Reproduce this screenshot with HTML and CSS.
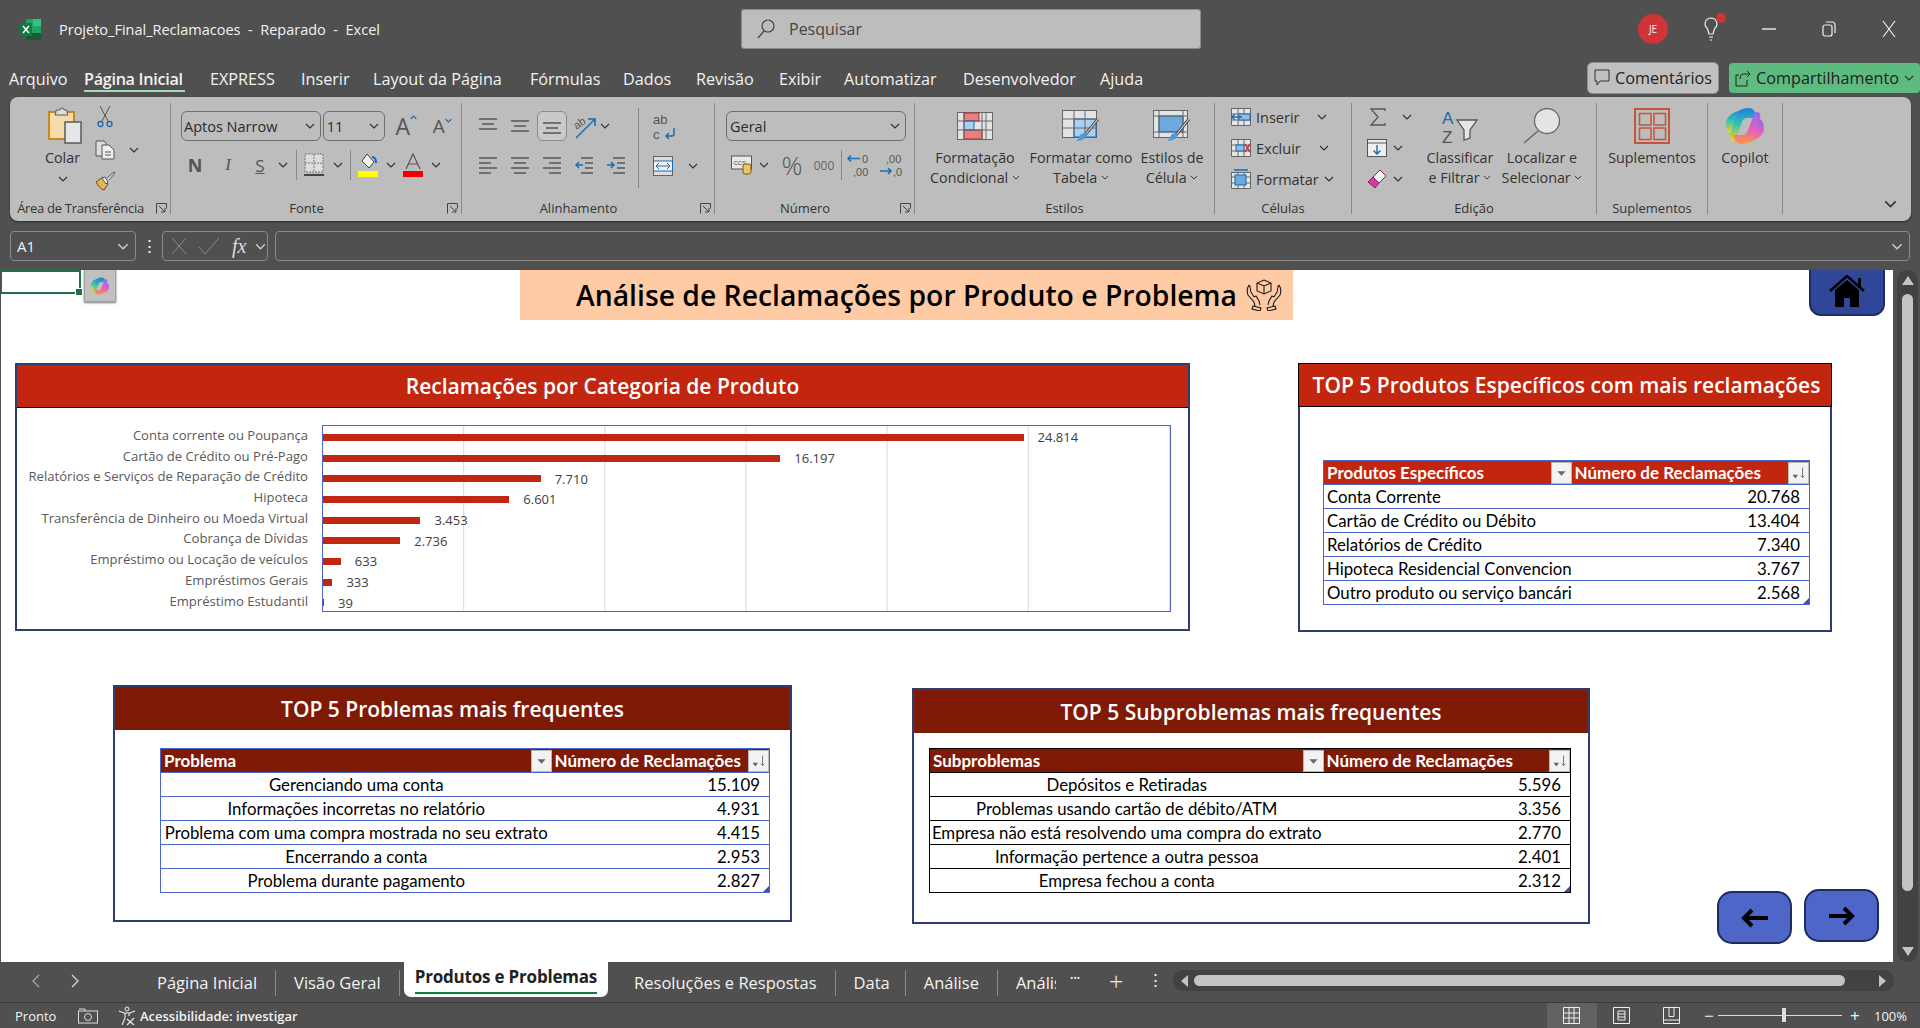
FILE: index.html
```html
<!DOCTYPE html>
<html lang="pt-BR">
<head>
	<meta charset="utf-8">
	<title>Projeto_Final_Reclamacoes - Reparado - Excel</title>
	<link rel="stylesheet" href="styles.css">
</head>
<body>
	<!-- icones usados mais de uma vez -->
	<svg class="defs" width="0" height="0">
		<defs>
			<symbol id="chev" viewBox="0 0 10 6"><path d="M1 1l4 4 4-4" fill="none" stroke="#333" stroke-width="1.2"/></symbol>
			<symbol id="launcher" viewBox="0 0 11 11"><path d="M.5 10.5V.5h10v5M3 3l6 6M9 5v4H5" fill="none" stroke="#444"/></symbol>
			<linearGradient id="cpA" x1="0" y1="0" x2="0" y2="1"><stop offset="0" stop-color="#1c7fe0"/><stop offset=".5" stop-color="#35c3b0"/><stop offset="1" stop-color="#f4d21f"/></linearGradient>
			<linearGradient id="cpB" x1="0" y1="0" x2="0" y2="1"><stop offset="0" stop-color="#8a6cf0"/><stop offset=".55" stop-color="#e85fc0"/><stop offset="1" stop-color="#f79a3a"/></linearGradient>
			<symbol id="copilot" viewBox="0 0 38 36">
				<path d="M23 0c-5 0-8 2-10 8L9 21c-1 3-3 4-5 4-3-2-4-5-4-9C0 10 5 5 12 3c3-2 7-3 11-3z" fill="url(#cpA)"/>
				<path d="M23 0c4 0 6 3 7 7l1 3H21c-2 0-4 1-5 4l-5 14c-1 3-2 5-4 5-3 0-4-3-3-6l4-13c2-6 6-14 15-14z" fill="url(#cpA)"/>
				<path d="M15 36c5 0 8-2 10-8l4-13c1-3 3-4 5-4 3 2 4 5 4 9 0 6-5 11-12 13-3 2-7 3-11 3z" fill="url(#cpB)"/>
				<path d="M15 36c-4 0-6-3-7-7l-1-2h10c2 0 4-2 5-5l5-13c1-3 2-5 4-5 3 0 4 3 3 6l-4 13c-2 6-6 13-15 13z" fill="url(#cpB)"/>
			</symbol>
			<symbol id="sort-btn" viewBox="0 0 21 22">
				<path d="M4 13l3 4 3-4z" fill="#666"/><path d="M15 5v11M13 14l2 2 2-2" fill="none" stroke="#666"/>
			</symbol>
			<symbol id="filter-btn" viewBox="0 0 21 22"><path d="M6 9l4.500 5 4.500-5z" fill="#666"/></symbol>
		</defs>
	</svg>

	<header class="titlebar">
		<svg class="xl-logo" width="21" height="21" viewBox="0 0 21 21">
			<rect x="6" y="0" width="15" height="21" rx="1.500" fill="#21a366"/>
			<rect x="13" y="0" width="8" height="7" fill="#33c481"/>
			<rect x="6" y="14" width="15" height="7" fill="#185c37"/>
			<rect x="0" y="4" width="12" height="13" rx="1" fill="#107c41"/>
			<path d="M3 7l6 7M9 7l-6 7" stroke="#fff" stroke-width="1.500"/>
		</svg>
		<span class="doc-name">Projeto_Final_Reclamacoes &nbsp;-&nbsp; Reparado &nbsp;-&nbsp; Excel</span>
		<div class="searchbox">
			<svg width="20" height="22" viewBox="0 0 20 22"><circle cx="12" cy="8" r="6" fill="none" stroke="#444" stroke-width="1.200"/><path d="M8 13l-6 7" stroke="#444" stroke-width="1.200"/></svg>
			<span>Pesquisar</span>
		</div>
		<div class="win-tools">
			<span class="avatar">JE</span>
			<span class="bulb">
				<svg width="14" height="24" viewBox="0 0 14 24"><path d="M7 1a6 6 0 0 0-3.500 10.800L5 17h4l1.500-5.200A6 6 0 0 0 7 1zM5 20h4M6 23h2" fill="none" stroke="#eee" stroke-width="1.200"/></svg>
				<i class="bulb-dot"></i>
			</span>
			<svg class="win-min" width="14" height="2" viewBox="0 0 14 2"><path d="M0 1h14" stroke="#eee" stroke-width="1.400"/></svg>
			<svg class="win-max" width="14" height="16" viewBox="0 0 14 16"><rect x="1" y="4" width="9" height="11" rx="2" fill="none" stroke="#eee" stroke-width="1.200"/><path d="M4 1h6a3 3 0 0 1 3 3v8" fill="none" stroke="#eee" stroke-width="1.200"/></svg>
			<svg class="win-close" width="14" height="18" viewBox="0 0 14 18"><path d="M1 1l12 16M13 1L1 17" stroke="#eee" stroke-width="1.200"/></svg>
		</div>
	</header>

	<nav class="menubar">
		<a class="m-arquivo">Arquivo</a>
		<a class="m-home active">Página Inicial</a>
		<a class="m-express">EXPRESS</a>
		<a class="m-inserir">Inserir</a>
		<a class="m-layout">Layout da Página</a>
		<a class="m-formulas">Fórmulas</a>
		<a class="m-dados">Dados</a>
		<a class="m-revisao">Revisão</a>
		<a class="m-exibir">Exibir</a>
		<a class="m-auto">Automatizar</a>
		<a class="m-dev">Desenvolvedor</a>
		<a class="m-ajuda">Ajuda</a>
		<div class="menu-actions">
			<button class="btn-comments">
				<svg width="16" height="18" viewBox="0 0 16 18"><path d="M1 1h14v11H6l-3 4v-4H1z" fill="none" stroke="#333"/></svg>
				Comentários
			</button>
			<button class="btn-share">
				<svg width="16" height="18" viewBox="0 0 16 18"><path d="M12 2l3 3-3 3M15 5H9c-3 0-4 2-4 5M12 11v6H1V6h3" fill="none" stroke="#222"/></svg>
				Compartilhamento
				<svg class="chev" viewBox="0 0 10 6"><use href="#chev"/></svg>
			</button>
		</div>
	</nav>

	<section class="ribbon">
		<!-- Area de transferencia -->
		<div class="group g-clip">
			<div class="group-body">
				<div class="paste">
					<div class="big-icon">
						<svg width="34" height="37" viewBox="0 0 34 37">
							<rect x="1" y="5" width="25" height="27" fill="#f6dca8" stroke="#c58a1f" stroke-width="2"/>
							<path d="M8 5V3h4a2 2 0 0 1 4 0h3v2l1 3H7z" fill="#ddd" stroke="#5a5a5a"/>
							<rect x="17" y="15" width="16" height="21" fill="#e6e6e6" stroke="#5a5a5a" stroke-width="1.500"/>
						</svg>
					</div>
					<span class="big-label">Colar</span>
					<svg class="chev paste-chev"><use href="#chev"/></svg>
				</div>
				<div class="clip-tools">
					<svg width="16" height="22" viewBox="0 0 16 22"><path d="M3 0l8 15M13 0L5 15" stroke="#555" fill="none"/><circle cx="3.500" cy="18" r="2.500" fill="none" stroke="#1a6bb0" stroke-width="1.300"/><circle cx="12.500" cy="18" r="2.500" fill="none" stroke="#1a6bb0" stroke-width="1.300"/></svg>
					<div class="copy-row">
						<svg width="20" height="20" viewBox="0 0 20 20"><path d="M1 1h8l2 2v13H1z" fill="#ddd" stroke="#555"/><path d="M7 5h7l5 5v9H7z" fill="#eee" stroke="#555"/><path d="M10 12h6M10 15h6" stroke="#555"/></svg>
						<svg class="chev"><use href="#chev"/></svg>
					</div>
					<svg width="21" height="20" viewBox="0 0 21 20"><path d="M1 11l7-5 5 7-4 6c-3-1-6-4-8-8z" fill="#e6b455" stroke="#6b4a12"/><path d="M7 7l3-1 3 5-2 2z" fill="#f4f4f4" stroke="#555"/><path d="M12 7l7-6 1 1-6 7" fill="#ddd" stroke="#555"/></svg>
				</div>
			</div>
			<div class="group-label"><span>Área de Transferência</span><svg class="launcher"><use href="#launcher"/></svg></div>
		</div>

		<!-- Fonte -->
		<div class="group g-font">
			<div class="group-body">
				<div class="tool-row">
					<div class="select sel-font"><span>Aptos Narrow</span><svg class="chev"><use href="#chev"/></svg></div>
					<div class="select sel-size"><span>11</span><svg class="chev"><use href="#chev"/></svg></div>
					<span class="grow-a big">A<svg width="7" height="5" viewBox="0 0 10 6"><path d="M1 5l4-4 4 4" fill="none" stroke="#1a6bb0" stroke-width="1.800"/></svg></span>
					<span class="grow-a">A<svg width="7" height="5" viewBox="0 0 10 6"><path d="M1 1l4 4 4-4" fill="none" stroke="#1a6bb0" stroke-width="1.800"/></svg></span>
				</div>
				<div class="tool-row row2">
					<span class="t w28 fmt bold">N</span>
					<span class="t w38 fmt ital">I</span>
					<span class="t w26 fmt under">S</span>
					<span class="t w20"><svg class="chev"><use href="#chev"/></svg></span>
					<i class="vsep"></i>
					<span class="t w32"><svg width="20" height="24" viewBox="0 0 20 24"><path d="M1 1h18v18H1zM10 1v18M1 10h18" fill="#ddd" stroke="#777" stroke-dasharray="2 1"/><path d="M0 22h20" stroke="#444" stroke-width="2"/></svg></span>
					<span class="t w16"><svg class="chev"><use href="#chev"/></svg></span>
					<i class="vsep"></i>
					<span class="t w32"><svg width="20" height="24" viewBox="0 0 20 24"><path d="M9 1l7 8-5 6-7-7z" fill="#f2f2f2" stroke="#444"/><path d="M14 4c3 0 4 3 4 6" fill="none" stroke="#1a6bb0" stroke-width="2"/><rect y="18" width="20" height="6" fill="#ffff00"/></svg></span>
					<span class="t w14"><svg class="chev"><use href="#chev"/></svg></span>
					<span class="t w30"><svg width="20" height="24" viewBox="0 0 20 24"><path d="M3 16L10 1l7 15M5.500 11h9" fill="none" stroke="#555" stroke-width="1.200"/><rect y="18" width="20" height="6" fill="#f00000"/></svg></span>
					<span class="t w16"><svg class="chev"><use href="#chev"/></svg></span>
				</div>
			</div>
			<div class="group-label"><span>Fonte</span><svg class="launcher"><use href="#launcher"/></svg></div>
		</div>

		<!-- Alinhamento -->
		<div class="group g-align">
			<div class="group-body align-body">
				<div class="align-main">
					<div class="tool-row">
						<span class="t w32"><svg width="18" height="16" viewBox="0 0 18 16"><path d="M0 1h18M3 6h12M0 11h18" stroke="#555" stroke-width="1.400"/></svg></span>
						<span class="t w32"><svg width="18" height="16" viewBox="0 0 18 16"><path d="M0 3h18M3 8h12M0 13h18" stroke="#555" stroke-width="1.400"/></svg></span>
						<span class="t w30 pressed"><svg width="18" height="16" viewBox="0 0 18 16"><path d="M0 5h18M3 10h12M0 15h18" stroke="#555" stroke-width="1.400"/></svg></span>
						<span class="t w30 orient"><svg width="26" height="26" viewBox="0 0 26 26"><path d="M6 25L25 6M18 6h7v7" fill="none" stroke="#1a6bb0" stroke-width="1.500"/><text x="3" y="14" class="orient-txt" transform="rotate(-35 9 10)">ab</text></svg></span>
						<span class="t w14"><svg class="chev"><use href="#chev"/></svg></span>
					</div>
					<div class="tool-row row2">
						<span class="t w32"><svg width="18" height="18" viewBox="0 0 18 18"><path d="M0 2h18M0 7h12M0 12h18M0 17h12" stroke="#555" stroke-width="1.400"/></svg></span>
						<span class="t w32"><svg width="18" height="18" viewBox="0 0 18 18"><path d="M0 2h18M3 7h12M0 12h18M3 17h12" stroke="#555" stroke-width="1.400"/></svg></span>
						<span class="t w32"><svg width="18" height="18" viewBox="0 0 18 18"><path d="M0 2h18M6 7h12M0 12h18M6 17h12" stroke="#555" stroke-width="1.400"/></svg></span>
						<span class="t w32"><svg width="18" height="18" viewBox="0 0 18 18"><path d="M6 2h12M10 7h8M10 12h8M6 17h12" stroke="#555" stroke-width="1.400"/><path d="M8 9H1M4 6L1 9l3 3" fill="none" stroke="#1a6bb0" stroke-width="1.500"/></svg></span>
						<span class="t w32"><svg width="18" height="18" viewBox="0 0 18 18"><path d="M6 2h12M10 7h8M10 12h8M6 17h12" stroke="#555" stroke-width="1.400"/><path d="M0 9h7M4 6l3 3-3 3" fill="none" stroke="#1a6bb0" stroke-width="1.500"/></svg></span>
					</div>
				</div>
				<div class="align-side">
					<span class="t wrap-ic"><span class="abc">ab<br>c</span><svg width="12" height="12" viewBox="0 0 12 12"><path d="M10 0v6a2 2 0 0 1-2 2H2M5 5L2 8l3 3" fill="none" stroke="#1a6bb0" stroke-width="1.500"/></svg></span>
					<div class="merge-row">
						<svg width="20" height="20" viewBox="0 0 20 20"><rect x=".5" y=".5" width="19" height="19" fill="#ddd" stroke="#666"/><rect x=".5" y="5" width="19" height="10" fill="#f2f2f2" stroke="#1a6bb0"/><path d="M3 10h14M6 7l-3 3 3 3M14 7l3 3-3 3" fill="none" stroke="#1a6bb0"/></svg>
						<svg class="chev"><use href="#chev"/></svg>
					</div>
				</div>
			</div>
			<div class="group-label"><span>Alinhamento</span><svg class="launcher"><use href="#launcher"/></svg></div>
		</div>

		<!-- Numero -->
		<div class="group g-num">
			<div class="group-body">
				<div class="tool-row">
					<div class="select sel-num"><span>Geral</span><svg class="chev"><use href="#chev"/></svg></div>
				</div>
				<div class="tool-row row2">
					<span class="t w30"><svg width="21" height="20" viewBox="0 0 21 20"><rect x=".5" y="1" width="20" height="13" fill="#e8e8e8" stroke="#555"/><text x="2.500" y="10" class="mini-txt">CCS</text><rect x="12" y="9" width="8" height="10" rx="2" fill="#e9c46a" stroke="#7a5a12"/></svg></span>
					<span class="t w16"><svg class="chev"><use href="#chev"/></svg></span>
					<span class="t w40 pct">%</span>
					<span class="t w24 mil">000</span>
					<i class="vsep"></i>
					<span class="t w34"><svg width="24" height="26" viewBox="0 0 24 26"><path d="M13 6.500H1M4 3.500l-3 3 3 3" fill="none" stroke="#1a6bb0" stroke-width="1.500"/><text x="15" y="10.500" class="dec-txt">0</text><text x="6" y="23.500" class="dec-txt">,00</text></svg></span>
					<span class="t w32"><svg width="24" height="26" viewBox="0 0 24 26"><text x="6" y="10.500" class="dec-txt">,00</text><path d="M0 19h11M8 16l3 3-3 3" fill="none" stroke="#1a6bb0" stroke-width="1.500"/><text x="13" y="23.500" class="dec-txt">,0</text></svg></span>
				</div>
			</div>
			<div class="group-label"><span>Número</span><svg class="launcher"><use href="#launcher"/></svg></div>
		</div>

		<!-- Estilos -->
		<div class="group g-styles">
			<div class="group-body styles-body">
				<div class="big-btn b-cf">
					<div class="big-icon"><svg width="36" height="28" viewBox="0 0 36 28">
						<rect x=".5" y=".5" width="35" height="27" fill="#e4e4e4" stroke="#666"/>
						<rect x="7" y="1" width="15" height="8" fill="#e88080" stroke="#a33"/>
						<rect x="7" y="9" width="10" height="9" fill="#a8d0f0" stroke="#1a6bb0"/>
						<rect x="7" y="18" width="18" height="9" fill="#e88080" stroke="#a33"/>
						<path d="M7 1v26M25 1v26M29 1v26M1 9h34M1 18h34" fill="none" stroke="#666"/>
					</svg></div>
					<span class="big-label">Formatação<br>Condicional <svg class="chev tiny"><use href="#chev"/></svg></span>
				</div>
				<div class="big-btn b-tbl">
					<div class="big-icon"><svg width="38" height="32" viewBox="0 0 38 32">
						<rect x=".5" y=".5" width="34" height="27" fill="#e4e4e4" stroke="#666"/>
						<rect x="12" y="9" width="22" height="18" fill="#a8d0f0" stroke="#1a6bb0"/>
						<path d="M12 1v8M23 1v26M1 9h33M1 18h33M12 9v18" fill="none" stroke="#666"/>
						<path d="M36 9L23 25" stroke="#555" stroke-width="3"/><path d="M36 9L23 25" stroke="#eee"/>
						<path d="M19 24c4-2 6 0 5 3-2 3-7 4-10 4 3-1 3-5 5-7z" fill="#4d9ad5"/>
					</svg></div>
					<span class="big-label">Formatar como<br>Tabela <svg class="chev tiny"><use href="#chev"/></svg></span>
				</div>
				<div class="big-btn b-cell">
					<div class="big-icon"><svg width="38" height="32" viewBox="0 0 38 32">
						<rect x=".5" y=".5" width="34" height="27" fill="#e4e4e4" stroke="#666"/>
						<rect x="6" y="6" width="24" height="16" fill="#6fa8dc" stroke="#1a6bb0"/>
						<path d="M6 1v26M30 1v26M1 6h33M1 22h33" fill="none" stroke="#666"/>
						<path d="M36 9L23 25" stroke="#555" stroke-width="3"/><path d="M36 9L23 25" stroke="#eee"/>
						<path d="M19 24c4-2 6 0 5 3-2 3-7 4-10 4 3-1 3-5 5-7z" fill="#4d9ad5"/>
					</svg></div>
					<span class="big-label">Estilos de<br>Célula <svg class="chev tiny"><use href="#chev"/></svg></span>
				</div>
			</div>
			<div class="group-label no-launch"><span>Estilos</span></div>
		</div>

		<!-- Celulas -->
		<div class="group g-cells">
			<div class="group-body small-col">
				<div class="cell-row">
					<svg width="20" height="18" viewBox="0 0 20 18"><path d="M.5.5h19v17H.5zM7 .5v17M13 .5v17M.5 6h19M.5 12h19" fill="#e6e6e6" stroke="#666"/><rect x="8" y="6" width="11" height="6" fill="#8ebfe8" stroke="#1a6bb0"/><path d="M11 9H1M4 6L1 9l3 3" fill="none" stroke="#1a6bb0" stroke-width="1.300"/></svg>
					<span>Inserir</span><svg class="chev end e1"><use href="#chev"/></svg>
				</div>
				<div class="cell-row">
					<svg width="20" height="18" viewBox="0 0 20 18"><path d="M.5.5h19v17H.5zM7 .5v17M13 .5v17M.5 6h19M.5 12h19" fill="#e6e6e6" stroke="#666"/><rect x="5" y="6" width="8" height="6" fill="#8ebfe8" stroke="#1a6bb0"/><path d="M14 5l5 8M19 5l-5 8" stroke="#c33" stroke-width="1.500"/></svg>
					<span>Excluir</span><svg class="chev end e2"><use href="#chev"/></svg>
				</div>
				<div class="cell-row">
					<svg width="20" height="20" viewBox="0 0 20 20"><path d="M.5 3.500h19v16H.5zM7 3.500v16M13 3.500v16M.5 8h19M.5 14h19" fill="#e6e6e6" stroke="#666"/><rect x="4" y="6" width="11" height="10" fill="#6fa8dc" stroke="#1a6bb0"/><path d="M3 1h14" stroke="#1a6bb0" stroke-width="1.500"/></svg>
					<span>Formatar</span><svg class="chev end e3"><use href="#chev"/></svg>
				</div>
			</div>
			<div class="group-label no-launch"><span>Células</span></div>
		</div>

		<!-- Edicao -->
		<div class="group g-edit">
			<div class="group-body edit-body">
				<div class="small-col edit-small">
					<div class="edit-row sigma-row">
						<svg width="16" height="18" viewBox="0 0 16 18"><path d="M15 3V1H1l7 8-7 8h14v-2" fill="none" stroke="#555" stroke-width="1.300"/></svg>
						<svg class="chev"><use href="#chev"/></svg>
					</div>
					<div class="edit-row">
						<svg width="20" height="18" viewBox="0 0 20 18"><rect x=".5" y=".5" width="19" height="17" fill="#eee" stroke="#555"/><path d="M.5 4h19" stroke="#555"/><path d="M10 6v9M6.500 11.500L10 15l3.500-3.500" fill="none" stroke="#1a6bb0" stroke-width="1.400"/></svg>
						<svg class="chev"><use href="#chev"/></svg>
					</div>
					<div class="edit-row">
						<svg width="20" height="20" viewBox="0 0 20 20"><path d="M13 1l6 6-7 7-6-6z" fill="#f2f2f2" stroke="#8a2070"/><path d="M6 8l6 6-4 5-7-6z" fill="#d63d9a" stroke="#8a2070"/></svg>
						<svg class="chev"><use href="#chev"/></svg>
					</div>
				</div>
				<div class="big-btn b-sort">
					<div class="big-icon"><svg width="36" height="36" viewBox="0 0 36 36">
						<text x="0" y="15.500" class="az blue">A</text><text x="0" y="34.500" class="az">Z</text>
						<path d="M15 12h20l-7 10v8l-6 2V22z" fill="#e6e6e6" stroke="#555" stroke-width="1.300"/>
					</svg></div>
					<span class="big-label">Classificar<br>e Filtrar <svg class="chev tiny"><use href="#chev"/></svg></span>
				</div>
				<div class="big-btn b-find">
					<div class="big-icon"><svg width="38" height="36" viewBox="0 0 38 36">
						<circle cx="24" cy="13" r="12.500" fill="#e4e4e4" stroke="#666" stroke-width="1.300"/>
						<path d="M15 23L1 35" stroke="#666" stroke-width="1.400"/>
					</svg></div>
					<span class="big-label">Localizar e<br>Selecionar <svg class="chev tiny"><use href="#chev"/></svg></span>
				</div>
			</div>
			<div class="group-label no-launch"><span>Edição</span></div>
		</div>

		<!-- Suplementos -->
		<div class="group g-addin">
			<div class="group-body center-body">
				<div class="big-btn">
					<div class="big-icon"><svg width="36" height="36" viewBox="0 0 36 36">
						<rect x="1" y="1" width="34" height="34" fill="none" stroke="#c2553a" stroke-width="2"/>
						<rect x="5.500" y="5.500" width="11.500" height="11.500" fill="none" stroke="#c2553a" stroke-width="1.500"/>
						<rect x="20" y="5.500" width="11.500" height="11.500" fill="none" stroke="#c2553a" stroke-width="1.500"/>
						<rect x="5.500" y="20" width="11.500" height="11.500" fill="none" stroke="#c2553a" stroke-width="1.500"/>
						<rect x="20" y="20" width="11.500" height="11.500" fill="none" stroke="#c2553a" stroke-width="1.500"/>
					</svg></div>
					<span class="big-label">Suplementos</span>
				</div>
			</div>
			<div class="group-label no-launch"><span>Suplementos</span></div>
		</div>

		<!-- Copilot -->
		<div class="group g-copilot">
			<div class="group-body center-body">
				<div class="big-btn">
					<div class="big-icon"><svg width="38" height="36"><use href="#copilot"/></svg></div>
					<span class="big-label">Copilot</span>
				</div>
			</div>
		</div>
		<svg class="chev ribbon-more"><use href="#chev"/></svg>
	</section>

	<div class="formula-bar">
		<div class="fbox name-box"><span>A1</span><svg class="chev light"><use href="#chev"/></svg></div>
		<span class="f-dots">⋮</span>
		<div class="fbox fx-box">
			<svg width="16" height="18" viewBox="0 0 16 18"><path d="M1 1l14 16M15 1L1 17" stroke="#8a8a8a"/></svg>
			<svg class="fx-check" width="22" height="18" viewBox="0 0 22 18"><path d="M1 10l6 7L21 1" fill="none" stroke="#8a8a8a"/></svg>
			<span class="fx">fx</span>
			<svg class="chev light"><use href="#chev"/></svg>
		</div>
		<div class="fbox input-box"><svg class="chev light"><use href="#chev"/></svg></div>
	</div>

	<main class="workarea">
		<div class="sheet">
			<div class="cell-cursor"></div>
			<div class="copilot-chip"><svg width="18" height="18"><use href="#copilot"/></svg></div>

			<div class="page-title">
				<h1>Análise de Reclamações por Produto e Problema</h1>
				<svg width="36" height="32" viewBox="0 0 36 32" fill="none" stroke="#1c1c1c" stroke-width="1.100">
					<path d="M18 1l7 3v8l-7 3-7-3V4zM11 4l7 3 7-3M18 7v8"/>
					<path d="M3 6c-2 3-2 7-1 10l6 7 1 4M3 6c2 2 1 5 2 7l3 5M8 18l2-1 3 5 1 4"/>
					<path d="M7 27l8 2-1 3-8-2z"/>
					<path d="M33 6c2 3 2 7 1 10l-6 7-1 4M33 6c-2 2-1 5-2 7l-3 5M28 18l-2-1-3 5-1 4"/>
					<path d="M29 27l-8 2 1 3 8-2z"/>
				</svg>
			</div>

			<button class="nav-btn home-btn">
				<svg width="36" height="32" viewBox="0 0 36 32"><path d="M1 16L18 1l17 15" fill="none" stroke="#000" stroke-width="2.500"/><path d="M29 3h3v9h-3z"/><path d="M6 15L18 5l12 10v17h-9v-9h-6v9H6z"/></svg>
			</button>

			<!-- grafico -->
			<section class="card card-chart">
				<h2 class="card-head red">Reclamações por Categoria de Produto</h2>
				<div class="chart">
					<ul class="chart-labels">
						<li>Conta corrente ou Poupança</li>
						<li>Cartão de Crédito ou Pré-Pago</li>
						<li>Relatórios e Serviços de Reparação de Crédito</li>
						<li>Hipoteca</li>
						<li>Transferência de Dinheiro ou Moeda Virtual</li>
						<li>Cobrança de Dívidas</li>
						<li>Empréstimo ou Locação de veículos</li>
						<li>Empréstimos Gerais</li>
						<li>Empréstimo Estudantil</li>
					</ul>
					<div class="plot">
						<div class="bar-row"><i class="bar" style="width: 82.71%"></i><span>24.814</span></div>
						<div class="bar-row"><i class="bar" style="width: 53.99%"></i><span>16.197</span></div>
						<div class="bar-row"><i class="bar" style="width: 25.70%"></i><span>7.710</span></div>
						<div class="bar-row"><i class="bar" style="width: 22.00%"></i><span>6.601</span></div>
						<div class="bar-row"><i class="bar" style="width: 11.51%"></i><span>3.453</span></div>
						<div class="bar-row"><i class="bar" style="width: 9.12%"></i><span>2.736</span></div>
						<div class="bar-row"><i class="bar" style="width: 2.11%"></i><span>633</span></div>
						<div class="bar-row"><i class="bar" style="width: 1.11%"></i><span>333</span></div>
						<div class="bar-row"><i class="bar" style="width: 0.13%"></i><span>39</span></div>
					</div>
				</div>
			</section>

			<!-- top 5 produtos -->
			<section class="card card-prod">
				<h2 class="card-head red black-line">TOP 5 Produtos Específicos com mais reclamações</h2>
				<table class="xl-table t-prod">
					<colgroup><col class="c-prod"><col></colgroup>
					<thead><tr>
						<th><div class="th-in"><span>Produtos Específicos</span><svg class="filter"><use href="#filter-btn"/></svg></div></th>
						<th><div class="th-in"><span>Número de Reclamações</span><svg class="filter"><use href="#sort-btn"/></svg></div></th>
					</tr></thead>
					<tbody>
						<tr><td>Conta Corrente</td><td>20.768</td></tr>
						<tr><td>Cartão de Crédito ou Débito</td><td>13.404</td></tr>
						<tr><td>Relatórios de Crédito</td><td>7.340</td></tr>
						<tr><td>Hipoteca Residencial Convencional</td><td>3.767</td></tr>
						<tr><td>Outro produto ou serviço bancário</td><td>2.568</td></tr>
					</tbody>
				</table>
			</section>

			<!-- top 5 problemas -->
			<section class="card card-prob">
				<h2 class="card-head dark">TOP 5 Problemas mais frequentes</h2>
				<table class="xl-table t-prob centered">
					<colgroup><col class="c-prob"><col></colgroup>
					<thead><tr>
						<th><div class="th-in"><span>Problema</span><svg class="filter"><use href="#filter-btn"/></svg></div></th>
						<th><div class="th-in"><span>Número de Reclamações</span><svg class="filter"><use href="#sort-btn"/></svg></div></th>
					</tr></thead>
					<tbody>
						<tr><td>Gerenciando uma conta</td><td>15.109</td></tr>
						<tr><td>Informações incorretas no relatório</td><td>4.931</td></tr>
						<tr><td>Problema com uma compra mostrada no seu extrato</td><td>4.415</td></tr>
						<tr><td>Encerrando a conta</td><td>2.953</td></tr>
						<tr><td>Problema durante pagamento</td><td>2.827</td></tr>
					</tbody>
				</table>
			</section>

			<!-- top 5 subproblemas -->
			<section class="card card-sub">
				<h2 class="card-head dark">TOP 5 Subproblemas mais frequentes</h2>
				<table class="xl-table t-sub centered black">
					<colgroup><col class="c-sub"><col></colgroup>
					<thead><tr>
						<th><div class="th-in"><span>Subproblemas</span><svg class="filter"><use href="#filter-btn"/></svg></div></th>
						<th><div class="th-in"><span>Número de Reclamações</span><svg class="filter"><use href="#sort-btn"/></svg></div></th>
					</tr></thead>
					<tbody>
						<tr><td>Depósitos e Retiradas</td><td>5.596</td></tr>
						<tr><td>Problemas usando cartão de débito/ATM</td><td>3.356</td></tr>
						<tr><td>Empresa não está resolvendo uma compra do extrato</td><td>2.770</td></tr>
						<tr><td>Informação pertence a outra pessoa</td><td>2.401</td></tr>
						<tr><td>Empresa fechou a conta</td><td>2.312</td></tr>
					</tbody>
				</table>
			</section>

			<button class="nav-btn arrow-btn prev">
				<svg width="27" height="20" viewBox="0 0 27 20"><path d="M27 10H4M11 2l-8 8 8 8" fill="none" stroke="#000" stroke-width="4"/></svg>
			</button>
			<button class="nav-btn arrow-btn next">
				<svg width="26" height="20" viewBox="0 0 26 20"><path d="M0 10h22M15 2l8 8-8 8" fill="none" stroke="#000" stroke-width="4"/></svg>
			</button>
		</div>
		<div class="vscroll">
			<div class="vtrack">
				<i class="tri up"></i>
				<div class="vthumb"></div>
				<i class="tri down"></i>
			</div>
		</div>
	</main>

	<footer>
		<div class="tabbar">
			<svg class="tab-nav first" width="9" height="14" viewBox="0 0 9 14"><path d="M8 1L2 7l6 6" fill="none" stroke="#aaa" stroke-width="1.200"/></svg>
			<svg class="tab-nav" width="9" height="14" viewBox="0 0 9 14"><path d="M1 1l6 6-6 6" fill="none" stroke="#ddd" stroke-width="1.200"/></svg>
			<div class="tabs">
				<a class="tab">Página Inicial</a>
				<a class="tab">Visão Geral</a>
				<a class="tab active"><span>Produtos e Problemas</span></a>
				<a class="tab">Resoluções e Respostas</a>
				<a class="tab tab-data">Data</a>
				<a class="tab">Análise</a>
				<a class="tab cut">Análise</a>
			</div>
			<span class="tab-more">•••</span>
			<span class="tab-plus">+</span>
			<span class="tab-kebab">⋮</span>
			<div class="hscroll">
				<i class="tri left"></i>
				<div class="hthumb"></div>
				<i class="tri right"></i>
			</div>
		</div>
		<div class="statusbar">
			<span class="st-ready">Pronto</span>
			<svg class="st-cam" width="20" height="16" viewBox="0 0 20 16"><rect x=".5" y="3" width="19" height="12" fill="none" stroke="#ddd"/><path d="M1 1h6v2" fill="none" stroke="#ddd"/><circle cx="10" cy="9" r="3.500" fill="none" stroke="#ddd"/></svg>
			<svg class="st-acc" width="18" height="20" viewBox="0 0 18 20"><circle cx="9" cy="3" r="2" fill="none" stroke="#eee"/><path d="M1 5l5 2h6l5-2M7 7v5l-3 7M11 7v3M9 13l7 6M16 12l-7 7" fill="none" stroke="#eee" stroke-width="1.100"/></svg>
			<b class="st-acc-text">Acessibilidade: investigar</b>
			<div class="st-views">
				<span class="view on"><svg width="17" height="17" viewBox="0 0 17 17"><path d="M.5.5h16v16H.5zM6 .5v16M11 .5v16M.5 6h16M.5 11h16" fill="none" stroke="#eee"/></svg></span>
				<span class="view"><svg width="17" height="17" viewBox="0 0 17 17"><path d="M.5.5h16v16H.5z" fill="none" stroke="#eee"/><path d="M5 4h7v9H5zM5 7h7M5 10h7" fill="none" stroke="#eee"/></svg></span>
				<span class="view"><svg width="17" height="17" viewBox="0 0 17 17"><path d="M.5.5h16v16H.5zM.5 13h16M6 .5v9h5v-9" fill="none" stroke="#eee"/></svg></span>
			</div>
			<span class="zoom-sign minus">−</span>
			<div class="slider"><i></i></div>
			<span class="zoom-sign plus">+</span>
			<span class="zoom-val">100%</span>
		</div>
	</footer>
</body>
</html>
```

FILE: styles.css
```css
* {
	box-sizing: border-box;
}

html, body {
	margin: 0;
	height: 1028px;
	overflow: hidden;
}

body {
	background-color: #505050;
	font-family: "Open Sans", "Noto Sans", sans-serif;
	color: #f2f2f2;
	display: flex;
	flex-direction: column;
}

.defs {position: absolute;}

svg {flex: none; display: block;}

/* barra de titulo */
.titlebar {
	height: 55px;
	display: flex;
	align-items: center;
	padding: 3px 0 0 20px;
}

.doc-name {
	margin-left: 18px;
	width: 682px;
	font-size: 14.5px;
	white-space: nowrap;
}

.searchbox {
	width: 460px;
	height: 40px;
	background-color: #bdbdbd;
	border: 1px solid #8c8c8c;
	border-radius: 3px;
	display: flex;
	align-items: center;
	gap: 13px;
	padding-left: 14px;
	color: #444;
	font-size: 16px;
}

.win-tools {
	flex: 1;
	display: flex;
	align-items: center;
	padding-left: 437px;
}

.avatar {
	width: 30px;
	height: 30px;
	border-radius: 50%;
	background-color: #d13438;
	font-size: 10px;
	display: flex;
	align-items: center;
	justify-content: center;
}

.bulb {
	position: relative;
	margin-left: 36px;
}

.bulb-dot {
	position: absolute;
	top: -4px;
	left: 12px;
	width: 10px;
	height: 10px;
	border-radius: 50%;
	background-color: #d13438;
}

.win-min {margin-left: 44px;}
.win-max {margin-left: 46px;}
.win-close {margin-left: 46px;}

/* abas do menu */
.menubar {
	height: 42px;
	display: flex;
	align-items: flex-start;
	font-size: 16.2px;
	position: relative;
}

.menubar a {
	margin-top: 13px;
	height: 24px;
	white-space: nowrap;
}

.m-arquivo {margin-left: 9px; width: 75px;}
.m-home {width: 101px;}
.m-express {margin-left: 25px; width: 91px;}
.m-inserir {width: 72px;}
.m-layout {width: 157px;}
.m-formulas {width: 93px;}
.m-dados {width: 73px;}
.m-revisao {width: 83px;}
.m-exibir {width: 65px;}
.m-auto {width: 119px;}
.m-dev {width: 137px;}

.menubar a.active {
	font-weight: 600;
	border-bottom: 2px solid #a3dcbc;
	letter-spacing: -.3px;
}

.menu-actions {
	margin-left: auto;
	display: flex;
	gap: 11px;
	padding-top: 8px;
}

.menu-actions button {
	height: 30px;
	border: none;
	border-radius: 4px;
	font: inherit;
	color: #222;
	display: flex;
	align-items: center;
	justify-content: center;
	gap: 5px;
	padding: 0;
}

.btn-comments {
	width: 130px;
	background-color: #c0c0c0;
	outline: 1px solid #8f8f8f;
}

.btn-share {
	width: 191px;
	background-color: #5dbb80;
}

/* faixa de opcoes */
.ribbon {
	margin: 0 9px 0 10px;
	height: 124px;
	padding-top: 6px;
	background-color: #bdbdbd;
	border-radius: 8px;
	display: flex;
	position: relative;
	color: #333;
	font-size: 14.5px;
	box-shadow: 0 1px 2px #2a2a2a;
}

.group {
	height: 111px;
	border-right: 1px solid #8a8a8a;
	display: flex;
	flex-direction: column;
	flex: none;
}

.group-body {height: 95px; flex: none;}

.group-label {
	height: 20px;
	flex: none;
	display: flex;
	align-items: center;
	font-size: 13px;
	color: #333;
}

.group-label span {
	flex: 1;
	text-align: center;
	white-space: nowrap;
}

.g-clip .group-label span {letter-spacing: -.3px;}

.launcher {
	width: 11px;
	height: 11px;
	margin: 0 3px 0 5px;
}

.g-clip {width: 161px;}
.g-font {width: 291px;}
.g-align {width: 253px;}
.g-num {width: 200px;}
.g-styles {width: 300px;}
.g-cells {width: 137px;}
.g-edit {width: 245px;}
.g-addin {width: 111px;}
.g-copilot {width: 75px;}

.chev {
	width: 10px;
	height: 6px;
}

.chev.tiny {
	display: inline-block;
	width: 8px;
	height: 5px;
	vertical-align: 3px;
}

.ribbon-more {
	position: absolute;
	right: 14px;
	bottom: 13px;
	width: 13px;
	height: 8px;
}

.g-clip .group-body {
	display: flex;
	padding-left: 20px;
}

.paste {
	width: 65px;
	display: flex;
	flex-direction: column;
	align-items: center;
}

.paste .big-icon {padding-left: 4px;}
.paste-chev {margin-top: 8px;}

.clip-tools {
	height: 88px;
	width: 50px;
	display: flex;
	flex-direction: column;
	justify-content: space-between;
	padding: 3px 0 0 0;
}

.clip-tools > svg:first-child {margin-left: 2px;}

.copy-row {
	display: flex;
	align-items: center;
	gap: 14px;
}

.tool-row {
	display: flex;
	align-items: center;
	height: 30px;
	margin-top: 8px;
}

.tool-row.row2 {margin-top: 9px;}

.g-font .tool-row {padding-left: 10px;}
.g-num .tool-row {padding-left: 11px;}

.select {
	height: 30px;
	border: 1px solid #6e6e6e;
	border-radius: 6px;
	display: flex;
	align-items: center;
	justify-content: space-between;
	padding: 0 5px 0 2px;
	font-size: 14.5px;
	color: #2b2b2b;
}

.sel-font {width: 143px;}
.sel-size {width: 63px; margin-left: 2px; padding-left: 3px;}
.sel-num {width: 180px; padding-left: 3px;}

.grow-a {
	width: 32px;
	font-size: 19px;
	color: #555;
	display: flex;
	align-items: flex-start;
	padding-left: 3px;
}

.grow-a.big {
	font-size: 23px;
	margin-left: 8px;
	width: 38px;
}

.grow-a svg {margin-top: 5px;}

.t {
	height: 30px;
	display: flex;
	align-items: center;
	justify-content: center;
	flex: none;
}

.w14 {width: 14px;}
.w16 {width: 16px;}
.w20 {width: 20px;}
.w22 {width: 22px;}
.w24 {width: 24px;}
.w26 {width: 26px;}
.w28 {width: 28px;}
.w30 {width: 30px;}
.w32 {width: 32px;}
.w34 {width: 34px;}
.w38 {width: 38px;}
.w40 {width: 40px;}

.fmt {
	font-size: 17px;
	color: #555;
}

.fmt.bold {font-weight: 700; font-size: 18px;}
.fmt.ital {font-style: italic; font-family: "Liberation Serif", serif;}
.fmt.under {text-decoration: underline;}

.vsep {
	width: 1px;
	height: 30px;
	background-color: #8a8a8a;
	margin: 0 3px;
	flex: none;
}

.g-font .vsep {margin: 0 1px 0 3px;}
.g-font .vsep + .t + .t + .vsep {margin: 0 1px 0 4px;}

.align-body {display: flex;}

.align-main {
	width: 176px;
	padding-left: 10px;
}

.pressed {
	background-color: #c9c9c9;
	border: 1px solid #8a8a8a;
	border-radius: 6px;
	margin-left: 1px;
}

.orient {margin-left: 1px;}

.orient-txt {
	font-size: 11px;
	fill: #555;
	font-family: "Liberation Sans", sans-serif;
}

.align-side {
	margin-top: 5px;
	height: 80px;
	border-left: 1px solid #8a8a8a;
	padding-left: 14px;
	width: 76px;
}

.wrap-ic {
	width: 24px;
	height: 34px;
	margin-top: 3px;
	position: relative;
	justify-content: flex-start;
}

.abc {
	font-family: "Liberation Sans", sans-serif;
	font-size: 13px;
	line-height: 14.6px;
	color: #555;
}

.wrap-ic svg {margin: 12px 0 0 -3px;}

.merge-row {
	display: flex;
	align-items: center;
	gap: 15px;
	margin-top: 11px;
}

.pct {font-size: 26px; color: #555; font-weight: 300;}
.mil {font-size: 12px; color: #666;}
.g-num .vsep {margin: 0 0 0 5px;}

.mini-txt {font-size: 6px; fill: #444; font-family: "Liberation Sans", sans-serif;}
.dec-txt {font-size: 11px; fill: #555; font-family: "Liberation Sans", sans-serif;}

.styles-body {
	display: flex;
	padding-left: 14px;
}

.big-btn {
	display: flex;
	flex-direction: column;
	align-items: center;
	flex: none;
}

.big-icon {
	height: 45px;
	display: flex;
	align-items: center;
}

.big-label {
	font-size: 14.3px;
	line-height: 20px;
	text-align: center;
	white-space: nowrap;
	color: #333;
}

.b-cf {width: 92px;}
.b-tbl {width: 110px; margin-left: 5px;}
.b-cell {width: 72px;}

.cell-row {
	height: 28px;
	display: flex;
	align-items: center;
	gap: 5px;
	padding-left: 16px;
	margin-bottom: 3px;
	white-space: nowrap;
}

.chev.end {margin-left: auto;}
.e1 {margin-right: 24px;}
.e2 {margin-right: 22px;}
.e3 {margin-right: 24px;}

.edit-body {display: flex;}

.edit-small {
	width: 65px;
	padding-left: 15px;
	flex: none;
}

.edit-row {
	height: 28px;
	margin-bottom: 3px;
	display: flex;
	align-items: center;
	gap: 6px;
}

.sigma-row {gap: 16px; padding-left: 3px;}

.b-sort {width: 86px;}
.b-find {width: 78px;}

.az {font-size: 17px; fill: #555; font-family: "Liberation Sans", sans-serif;}
.az.blue {fill: #1a6bb0;}

.center-body {
	display: flex;
	justify-content: center;
}

/* barra de formulas */
.formula-bar {
	height: 49px;
	padding: 10px 10px 9px;
	display: flex;
	align-items: stretch;
}

.fbox {
	border: 1px solid #8a8a8a;
	border-radius: 4px;
	display: flex;
	align-items: center;
}

.name-box {
	width: 126px;
	padding: 0 6px 0 6px;
	justify-content: space-between;
	font-size: 15px;
}

.chev.light {filter: invert(1); width: 12px; height: 7px;}

.f-dots {
	width: 26px;
	text-align: center;
	font-size: 17px;
	line-height: 30px;
}

.fx-box {
	width: 106px;
	padding: 0 0 0 8px;
}

.fx-check {margin-left: 11px;}

.fx {
	font-family: "Liberation Serif", serif;
	font-style: italic;
	font-size: 20px;
	color: #ddd;
	width: 17px;
	margin-left: 12px;
}

.fx-box .chev {width: 11px; margin-left: 6px;}

.input-box {
	margin-left: 7px;
	flex: 1;
	justify-content: flex-end;
	padding-right: 6px;
}

/* planilha */
.workarea {
	height: 692px;
	display: flex;
}

.sheet {
	width: 1893px;
	background-color: #fff;
	border-left: 1px solid #505050;
	position: relative;
	overflow: hidden;
	color: #000;
}

.cell-cursor {
	position: absolute;
	left: -1px;
	top: 0;
	width: 81px;
	height: 24px;
	border: 2px solid #1f7145;
}

.cell-cursor::after {
	content: "";
	position: absolute;
	right: -4px;
	bottom: -4px;
	width: 6px;
	height: 6px;
	background-color: #1f7145;
	border: 1px solid #fff;
}

.copilot-chip {
	position: absolute;
	left: 83px;
	top: -1px;
	width: 32px;
	height: 33px;
	background-color: #c0c0c0;
	border: 1px solid #a0a0a0;
	box-shadow: 0 1px 2px #777;
	display: flex;
	align-items: center;
	justify-content: center;
}

.page-title {
	position: absolute;
	left: 519px;
	top: 0;
	width: 773px;
	height: 50px;
	background-color: #ffcba4;
	display: flex;
	align-items: center;
	justify-content: flex-end;
	gap: 9px;
	padding-right: 11px;
}

.page-title h1 {
	margin: 0;
	font-size: 28.3px;
	font-weight: 600;
	white-space: nowrap;
}

.nav-btn {
	position: absolute;
	padding: 0;
	display: flex;
	align-items: center;
	justify-content: center;
	cursor: pointer;
}

.home-btn {
	left: 1808px;
	top: -12px;
	width: 76px;
	height: 58px;
	padding-top: 7px;
	background-color: #2f4699;
	border: 2px solid #1d2b5e;
	border-radius: 12px;
}

.arrow-btn {
	width: 75px;
	height: 53px;
	background-color: #4d66c8;
	border: 2px solid #1d2b5e;
	border-radius: 15px;
}

.prev {left: 1716px; top: 621px;}
.next {left: 1803px; top: 619px;}

.card {
	position: absolute;
	background-color: #fff;
	border: 2px solid #2f3c6e;
	display: flex;
	flex-direction: column;
}

.card-head {
	margin: 0;
	height: 43px;
	flex: none;
	display: flex;
	align-items: center;
	justify-content: center;
	color: #fff;
	font-size: 21px;
	font-weight: 600;
	white-space: nowrap;
}

.card-head.red {
	background-color: #c2260e;
	border-bottom: 1px solid #000;
}

.card-head.dark {background-color: #7f1a07;}

.card-chart {left: 14px; top: 93px; width: 1175px; height: 268px;}
.card-prod {left: 1297px; top: 93px; width: 534px; height: 269px;}
.card-prob {left: 112px; top: 415px; width: 679px; height: 237px;}
.card-sub {left: 911px; top: 418px; width: 678px; height: 236px;}

.card-prod .card-head {
	margin: -2px -2px 0;
	height: 44px;
	padding-left: 3px;
	border: 1px solid #000;
}

/* grafico de barras */
.chart {
	display: flex;
	padding: 17px 0 0 0;
}

.chart-labels {
	list-style: none;
	margin: 0;
	padding: 0 1px 0 0;
	width: 292px;
	flex: none;
	font-size: 13.1px;
	color: #595959;
	text-align: right;
}

.chart-labels li {
	height: 20.700px;
	line-height: 20.700px;
	white-space: nowrap;
}

.plot {
	width: 849px;
	margin-left: 13px;
	height: 187px;
	border: 1px solid #4a66c8;
	background-image: linear-gradient(to right, #d9d9d9 1px, transparent 1px);
	background-size: 16.667% 100%;
	background-position: -1px 0;
	padding-top: 1px;
}

.bar-row {
	height: 20.700px;
	display: flex;
	align-items: center;
	font-size: 13px;
	color: #404040;
}

.bar {
	height: 7px;
	background-color: #c2260e;
	display: block;
	min-width: 1px;
}

.bar-row span {margin-left: 14px;}

/* tabelas do excel */
.xl-table {
	table-layout: fixed;
	border-collapse: collapse;
	font-family: Lato, "Open Sans", sans-serif;
	font-size: 16.8px;
	color: #000;
}

.t-prod {width: 487px; margin: 53px 0 0 23px;}
.t-prob {width: 610px; margin: 18px 0 0 45px;}
.t-sub {width: 642px; margin: 15px 0 0 15px;}

.c-prod {width: 248px;}
.c-prob {width: 391px;}
.c-sub {width: 394px;}

.xl-table th,
.xl-table td {
	height: 24px;
	padding: 0;
	white-space: nowrap;
	overflow: hidden;
	border-top: 1px solid #4a66c8;
	border-bottom: 1px solid #4a66c8;
}

.xl-table th:first-child,
.xl-table td:first-child {
	border-left: 1px solid #4a66c8;
	padding-left: 3px;
}

.xl-table th:last-child,
.xl-table td:last-child {
	border-right: 1px solid #4a66c8;
}

.xl-table td:last-child {
	text-align: right;
	padding-right: 9px;
}

.xl-table.centered td:first-child {text-align: center; padding-left: 0;}

.xl-table.black th,
.xl-table.black td {border-color: #000;}

.xl-table th {
	color: #fff;
	font-weight: 700;
	font-size: 17px;
	text-align: left;
}

.t-prod th {background-color: #c2260e;}
.t-prob th,
.t-sub th {background-color: #7f1a07;}

.th-in {
	display: flex;
	align-items: center;
	justify-content: space-between;
	height: 22px;
}

.th-in span {white-space: nowrap;}

.xl-table th:last-child .th-in {padding-left: 3px;}

.filter {
	width: 21px;
	height: 22px;
	background-color: #f2f2f2;
	border: 1px solid #b8b8b8;
}

.xl-table tbody tr:last-child td:last-child {position: relative;}

.xl-table tbody tr:last-child td:last-child::after {
	content: "";
	position: absolute;
	right: 0;
	bottom: 0;
	border-left: 6px solid transparent;
	border-bottom: 6px solid #3a50a8;
}

/* barras de rolagem */
.vscroll {
	flex: 1;
	padding-left: 4px;
}

.vtrack {
	width: 21px;
	height: 100%;
	background-color: #424242;
	border-radius: 10px;
	display: flex;
	flex-direction: column;
	align-items: center;
	padding: 6px 0;
}

.vthumb {
	width: 11px;
	height: 607px;
	margin: 9px 0 56px;
	background-color: #c4c4c4;
	border-radius: 6px;
}

.tri {
	display: block;
	width: 0;
	height: 0;
	flex: none;
	border-style: solid;
	border-color: transparent;
}

.tri.up {border-width: 0 6px 9px; border-bottom-color: #c4c4c4;}
.tri.down {border-width: 9px 6px 0; border-top-color: #c4c4c4;}
.tri.left {border-width: 6px 7px 6px 0; border-right-color: #c4c4c4;}
.tri.right {border-width: 6px 0 6px 7px; border-left-color: #c4c4c4;}

/* abas das planilhas */
.tabbar {
	height: 41px;
	display: flex;
	align-items: flex-start;
	border-bottom: 1px solid #3a3a3a;
}

.tab-nav {margin-top: 12px;}
.tab-nav.first {margin-left: 31px;}
.tab-nav + .tab-nav {margin-left: 31px;}

.tabs {
	display: flex;
	margin-left: 77px;
	width: 918px;
	overflow: hidden;
	font-size: 16.500px;
	height: 36px;
	flex: none;
}

.tab {
	height: 26px;
	margin-top: 8px;
	padding: 0 18px;
	border-right: 1px solid #8a8a8a;
	white-space: nowrap;
	line-height: 26px;
}

.tab:first-child {padding-left: 0;}
.tab-data {padding-right: 15px;}

.tab.active {
	height: 35px;
	margin-top: 0;
	border: none;
	margin: 0 8px 0 4px;
	padding: 0 11px;
	background-color: #fff;
	color: #222;
	font-weight: 700;
	font-size: 17px;
	border-radius: 0 0 7px 7px;
	line-height: 30px;
	letter-spacing: -.2px;
}

.tab.active span {
	display: block;
	height: 32px;
	border-bottom: 2px solid #107c41;
}

.tab.cut {
	width: 58px;
	padding-right: 0;
	overflow: hidden;
	border: none;
}

.tab-more {
	margin: 9px 0 0 -5px;
	font-size: 9px;
	width: 30px;
}

.tab-plus {
	margin: 2px 0 0 9px;
	font-size: 25px;
	width: 30px;
	font-weight: 300;
}

.tab-kebab {
	margin: 6px 0 0 1px;
	font-size: 17px;
	width: 30px;
	text-align: center;
}

.hscroll {
	margin: 8px 0 0 3px;
	width: 721px;
	height: 21px;
	background-color: #424242;
	border-radius: 10px;
	display: flex;
	align-items: center;
	padding: 0 8px;
}

.hthumb {
	width: 651px;
	height: 11px;
	margin: 0 auto 0 6px;
	background-color: #c4c4c4;
	border-radius: 6px;
}

/* barra de status */
.statusbar {
	height: 25px;
	display: flex;
	align-items: center;
	font-size: 13px;
	padding-left: 15px;
	color: #f2f2f2;
}

.st-ready {width: 63px;}
.st-acc {margin-left: 20px;}
.st-acc-text {margin-left: 4px; font-weight: 600; font-size: 13px;}

.st-views {
	display: flex;
	margin-left: auto;
	height: 25px;
}

.view {
	width: 50px;
	display: flex;
	align-items: center;
	justify-content: center;
}

.view.on {background-color: #626262;}

.zoom-sign {
	font-size: 17px;
	width: 12px;
}

.zoom-sign.minus {margin-left: 7px;}
.zoom-sign.plus {margin-left: 8px;}

.slider {
	width: 124px;
	height: 1px;
	margin-left: 2px;
	background-color: #ddd;
	position: relative;
}

.slider i {
	position: absolute;
	left: 64px;
	top: -7px;
	width: 4px;
	height: 14px;
	background-color: #ddd;
}

.zoom-val {
	margin: 0 13px 0 12px;
	font-size: 13px;
}
```
